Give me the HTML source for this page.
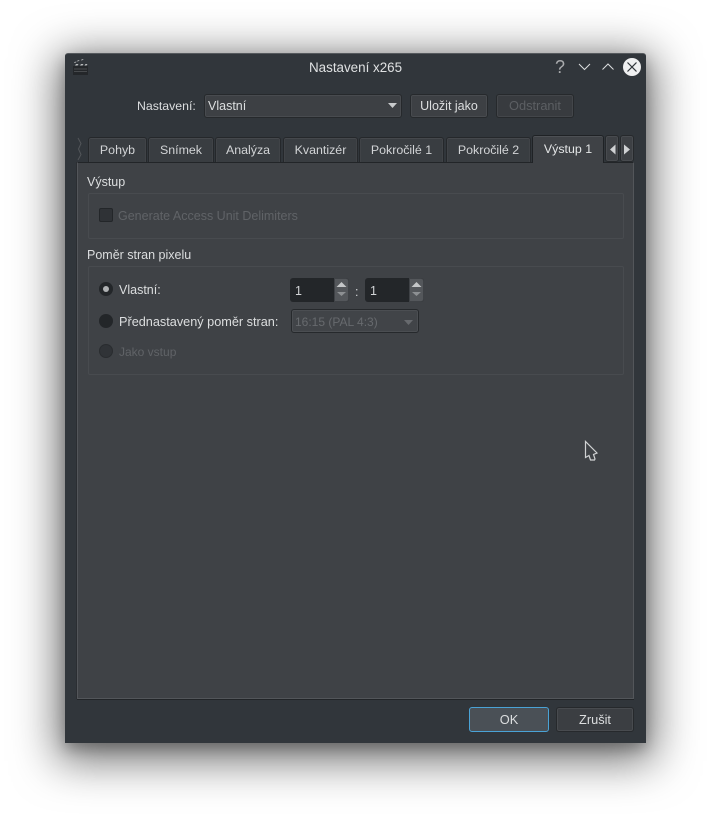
<!DOCTYPE html>
<html><head><meta charset="utf-8"><style>
html,body{margin:0;padding:0;background:#fff;width:711px;height:820px;overflow:hidden}
body{position:relative;font-family:"Liberation Sans",sans-serif;font-size:12.500px;color:#dcdedf}
div{position:absolute;box-sizing:border-box}
.t{white-space:nowrap;line-height:16px;height:16px}
.btn{background:#3d4044;border:1px solid #26292c;border-radius:3px;box-shadow:inset 0 0 0 1px #484b4f;text-align:center;line-height:24px}
.tab{top:137px;height:25px;background:#393d41;border:1px solid #25282b;border-bottom:0;border-radius:3px 3px 0 0;box-shadow:inset 0 1px 0 #45484c,inset 1px 0 0 #404347,inset -1px 0 0 #404347;text-align:center;line-height:24px;color:#d2d4d6;font-size:12.400px}
.grp{border:1px solid #484b4f;border-radius:2px;left:88px;width:536px}
.spin{background:#232629;border-radius:3px;height:24px;top:278px}
.sb{position:absolute;right:0;top:0;width:15px;height:24px;background:#54575b;border:1px solid #3f4246;border-radius:0 3px 3px 0}
</style></head><body>
<div style="left:65px;top:53px;width:581px;height:690px;background:#31363b;border-top:1px solid #55595d;border-radius:3px 3px 0 0;box-shadow:0 10px 44px 8px rgba(0,0,0,.55),0 6px 14px rgba(0,0,0,.25)"></div>

<svg style="position:absolute;left:71px;top:58px" width="18" height="18" viewBox="0 0 18 18">
<rect x="2" y="8" width="15" height="9" fill="#24272a"/>
<path d="M3 11h13M3 13.500h13" stroke="#484b4e" stroke-width="1"/>
<path d="M6 3.500l2-.5 .5-1-2 .5zM10 2.500l2-.5 .5-1-2 .5zM3 5l2-.5 .5-1-2 .5zM4 7.500h2.500l1-1.500h-2.500zM9 7.500h2.500l1-1.500h-2.500zM13.500 7.500h2l1-1.500h-2z" fill="#b8babb"/>
</svg>
<div class="t" style="left:309px;top:60px;font-size:13.400px;color:#dfe1e2">Nastavení x265</div>
<div class="t" style="left:555px;top:58px;font-size:18px;line-height:18px;color:#a9abad">?</div>
<svg style="position:absolute;left:577px;top:60px" width="40" height="14" viewBox="0 0 40 14" fill="none" stroke="#dcdedf" stroke-width="1">
<path d="M2 4l5.500 5.500L13 4"/><path d="M25.500 9.500L31 4l5.500 5.500"/></svg>
<svg style="position:absolute;left:622px;top:57px" width="20" height="20" viewBox="0 0 20 20">
<circle cx="10" cy="10" r="9" fill="#eff0f1"/><path d="M5.500 5.500l9 9M14.500 5.500l-9 9" stroke="#31363b" stroke-width="1.200"/></svg>

<div class="t" style="left:137px;top:98px;font-size:12.300px">Nastavení:</div>
<div class="btn" style="left:204px;top:94px;width:198px;height:24px;text-align:left;padding-left:3px;line-height:22px">Vlastní</div>
<svg style="position:absolute;left:388px;top:103px" width="10" height="6"><path d="M0 0h9L4.500 5z" fill="#c8cacc"/></svg>
<div class="btn" style="left:410px;top:94px;width:78px;height:24px;line-height:22px">Uložit jako</div>
<div class="btn" style="left:496px;top:94px;width:78px;height:24px;line-height:22px;box-shadow:inset 0 0 0 1px #43464a;background:#383b3f;color:#5c5f63;font-size:12.800px">Odstranit</div>

<svg style="position:absolute;left:75px;top:137px" width="9" height="24" fill="none"><path d="M3 1L6 6.500 3.500 12 6 17.500 3 23" stroke="#53565a"/></svg>
<div class="tab" style="left:88px;width:59px">Pohyb</div>
<div class="tab" style="left:148px;width:66px">Snímek</div>
<div class="tab" style="left:215px;width:66px">Analýza</div>
<div class="tab" style="left:283px;width:75px">Kvantizér</div>
<div class="tab" style="left:359px;width:85px">Pokročilé 1</div>
<div class="tab" style="left:446px;width:85px">Pokročilé 2</div>

<div style="left:77px;top:162px;width:557px;height:537px;background:#3f4246;border:1px solid #53565a;border-top-color:#222528;box-shadow:0 1px 0 #222528,-1px 0 0 #2b2e32"></div>
<div class="tab" style="left:532px;top:135px;width:72px;height:28px;background:#3f4246;border-color:#1f2225;box-shadow:inset 0 1px 0 #4d5054;line-height:27px;color:#e4e6e7;font-size:12.400px;z-index:2">Výstup 1</div>
<div class="btn" style="left:605px;top:135px;width:14px;height:27px"></div>
<div class="btn" style="left:620px;top:135px;width:14px;height:27px"></div>
<svg style="position:absolute;left:608px;top:144px" width="24" height="11"><path d="M7.500 .500v10L2 5.500z" fill="#cfd1d3"/><path d="M16 .500v10l6-5z" fill="#cfd1d3"/></svg>

<div class="t" style="left:87px;top:174px">Výstup</div>
<div class="grp" style="top:193px;height:46px"></div>
<div style="left:99px;top:208px;width:14px;height:14px;background:#2f3236;border:1px solid #232629;border-radius:2px"></div>
<div class="t" style="left:118px;top:208px;color:#606367;font-size:12.500px">Generate Access Unit Delimiters</div>

<div class="t" style="left:87px;top:247px">Poměr stran pixelu</div>
<div class="grp" style="top:266px;height:109px"></div>

<div style="left:99px;top:282px;width:14px;height:14px;background:#232629;border-radius:50%"></div>
<div style="left:103px;top:286px;width:6px;height:6px;background:#b0b2b4;border-radius:50%"></div>
<div class="t" style="left:119px;top:282px">Vlastní:</div>

<div class="spin" style="left:290px;width:59px"><div class="t" style="left:5px;top:5px;color:#d2d4d6">1</div><div class="sb"></div>
<svg style="position:absolute;right:2px;top:4px" width="11" height="16"><path d="M5.500 0l5 5H.500z" fill="#c4c6c8"/><path d="M1 10h9l-4.500 4z" fill="#8d9093"/></svg></div>
<div class="t" style="left:355px;top:284px;color:#d2d4d6">:</div>
<div class="spin" style="left:365px;width:59px"><div class="t" style="left:5px;top:5px;color:#d2d4d6">1</div><div class="sb"></div>
<svg style="position:absolute;right:2px;top:4px" width="11" height="16"><path d="M5.500 0l5 5H.500z" fill="#c4c6c8"/><path d="M1 10h9l-4.500 4z" fill="#8d9093"/></svg></div>

<div style="left:99px;top:314px;width:14px;height:14px;background:#232629;border-radius:50%"></div>
<div class="t" style="left:119px;top:314px;font-size:12.700px">Přednastavený poměr stran:</div>
<div style="left:291px;top:309px;width:128px;height:24px;background:#414448;border:1px solid #26292c;border-radius:3px;box-shadow:inset 0 0 0 1px #4b4e52"></div>
<div class="t" style="left:295px;top:314px;color:#676a6e;font-size:12px">16:15 (PAL 4:3)</div>
<svg style="position:absolute;left:404px;top:320px" width="10" height="6"><path d="M0 0h9L4.500 5z" fill="#676a6e"/></svg>

<div style="left:99px;top:344px;width:14px;height:14px;background:#303337;border:1px solid #292c2f;border-radius:50%"></div>
<div class="t" style="left:119px;top:344px;color:#606367;font-size:12px">Jako vstup</div>

<svg style="position:absolute;left:584px;top:440px" width="16" height="24" fill="#3f4246"><path d="M1.500 1.500v16l3.500-2 1.500 4.500h4l.5-1-1.500-4.500 3.500-1.500z" stroke="#d0d2d3" stroke-width="1.200"/></svg>

<div class="btn" style="left:469px;top:707px;width:80px;height:25px;line-height:24px;background:#4a5056;border-color:#4aa3d6;box-shadow:none;font-size:12.800px">OK</div>
<div class="btn" style="left:556px;top:707px;width:78px;height:25px;line-height:24px;background:#3b3e42;font-size:12.800px">Zrušit</div>
</body></html>
